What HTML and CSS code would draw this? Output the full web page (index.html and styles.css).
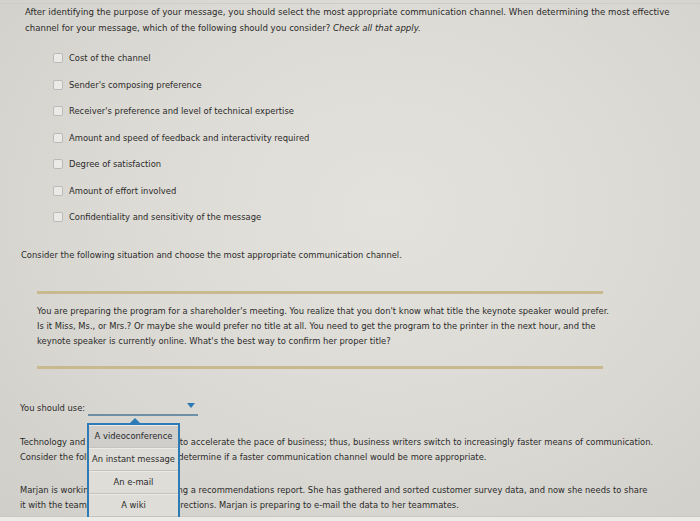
FILE: index.html
```html
<!DOCTYPE html>
<html lang="en">
<head>
    <meta charset="UTF-8">
    <meta name="viewport" content="width=device-width, initial-scale=1.0">
    <title>Communication Channels</title>
    <link rel="stylesheet" href="styles.css">
</head>
<body>
    <div class="page">
        <div class="question">
            <p class="prompt">After identifying the purpose of your message, you should select the most appropriate communication channel. When determining the most effective<br>channel for your message, which of the following should you consider? <em>Check all that apply.</em></p>
            <ul class="options">
                <li><span class="box"></span>Cost of the channel</li>
                <li><span class="box"></span>Sender's composing preference</li>
                <li><span class="box"></span>Receiver's preference and level of technical expertise</li>
                <li><span class="box"></span>Amount and speed of feedback and interactivity required</li>
                <li><span class="box"></span>Degree of satisfaction</li>
                <li><span class="box"></span>Amount of effort involved</li>
                <li><span class="box"></span>Confidentiality and sensitivity of the message</li>
            </ul>
        </div>

        <p class="intro">Consider the following situation and choose the most appropriate communication channel.</p>

        <div class="scenario">
            <p>You are preparing the program for a shareholder's meeting. You realize that you don't know what title the keynote speaker would prefer.<br>Is it Miss, Ms., or Mrs.? Or maybe she would prefer no title at all. You need to get the program to the printer in the next hour, and the<br>keynote speaker is currently online. What's the best way to confirm her proper title?</p>
        </div>

        <div class="answer">
            <span class="answer-label">You should use:</span>
            <span class="select"><span class="arrow"></span></span>
            <div class="menu">
                <div class="menu-item active">A videoconference</div>
                <div class="menu-item">An instant message</div>
                <div class="menu-item">An e-mail</div>
                <div class="menu-item">A wiki</div>
            </div>
        </div>

        <div class="next">
            <p>Technology and competition continue to accelerate the pace of business; thus, business writers switch to increasingly faster means of communication.<br>Consider the following situations and determine if a faster communication channel would be more appropriate.</p>
            <p>Marjan is working on a team developing a recommendations report. She has gathered and sorted customer survey data, and now she needs to share<br>it with the team and get their latest directions. Marjan is preparing to e-mail the data to her teammates.</p>
        </div>
    </div>
    <div class="bezel"></div>
</body>
</html>
```

FILE: styles.css
```css
html, body {
    margin: 0;
    padding: 0;
    height: 100%;
    overflow: hidden;
}
body {
    background: radial-gradient(ellipse at 55% 40%, #e4e2dc 0%, #dcdad4 50%, #d0cec8 100%);
    font-family: "DejaVu Sans", Verdana, sans-serif;
    font-size: 8.4px;
    color: #2a2a2a;
    position: relative;
}
.page {
    height: 518px;
    border-top: 1px solid #cfcdc8;
    margin-top: 3px;
    box-sizing: border-box;
    white-space: nowrap;
}
p {
    margin: 0;
}

/* question */
.question {
    padding-left: 25px;
}
.prompt {
    font-size: 8.6px;
    line-height: 16px;
}
.prompt em {
    font-style: italic;
}
.options {
    list-style: none;
    margin: 14px 0 0 28px;
    padding: 0;
}
.options li {
    display: flex;
    align-items: center;
    height: 16px;
    margin-bottom: 10.5px;
}
.box {
    width: 8px;
    height: 8px;
    border: 1px solid #b9bbbb;
    border-radius: 2px;
    background: #eceae6;
    margin-right: 6px;
}

.intro {
    margin: 22px 0 0 21px;
    line-height: 16px;
}

/* scenario */
.scenario {
    margin: 28px 97px 0 37px;
    border-top: 3px solid #c9b98f;
    border-bottom: 3px solid #c9b98f;
    padding: 10px 0 17px;
    line-height: 15px;
}

/* answer */
.answer {
    position: relative;
    margin: 31px 0 0 20px;
    height: 16px;
    line-height: 16px;
    display: flex;
    align-items: center;
}
.select {
    width: 110px;
    height: 12px;
    margin-left: 3px;
    border-bottom: 2px solid #6f8fa7;
    position: relative;
    top: 1px;
}
.arrow {
    position: absolute;
    right: 3px;
    top: 1px;
    border-left: 4px solid transparent;
    border-right: 4px solid transparent;
    border-top: 5px solid #2c78b4;
}
.menu {
    position: absolute;
    left: 67px;
    top: 23px;
    width: 89px;
    border: 2px solid #2d7bb6;
    border-bottom: none;
    background: #dfddd8;
    z-index: 2;
}
.menu::before {
    content: "";
    position: absolute;
    left: 41px;
    top: -7px;
    border-left: 5px solid transparent;
    border-right: 5px solid transparent;
    border-bottom: 5px solid #2d7bb6;
}
.menu-item {
    height: 23px;
    line-height: 21px;
    text-align: center;
    border-bottom: 1px solid #c4c3bf;
    border-top: 1px solid #eceae6;
    box-sizing: border-box;
}
.menu-item.active {
    background: #cfcecb;
}

/* following section */
.next {
    margin: 19px 0 0 20px;
    line-height: 15px;
}
.next p + p {
    margin-top: 18px;
}

.bezel {
    position: absolute;
    left: 0;
    right: 0;
    bottom: 0;
    height: 4px;
    background: #ecebe8;
    border-top: 1px solid #c9c8c4;
}
```
